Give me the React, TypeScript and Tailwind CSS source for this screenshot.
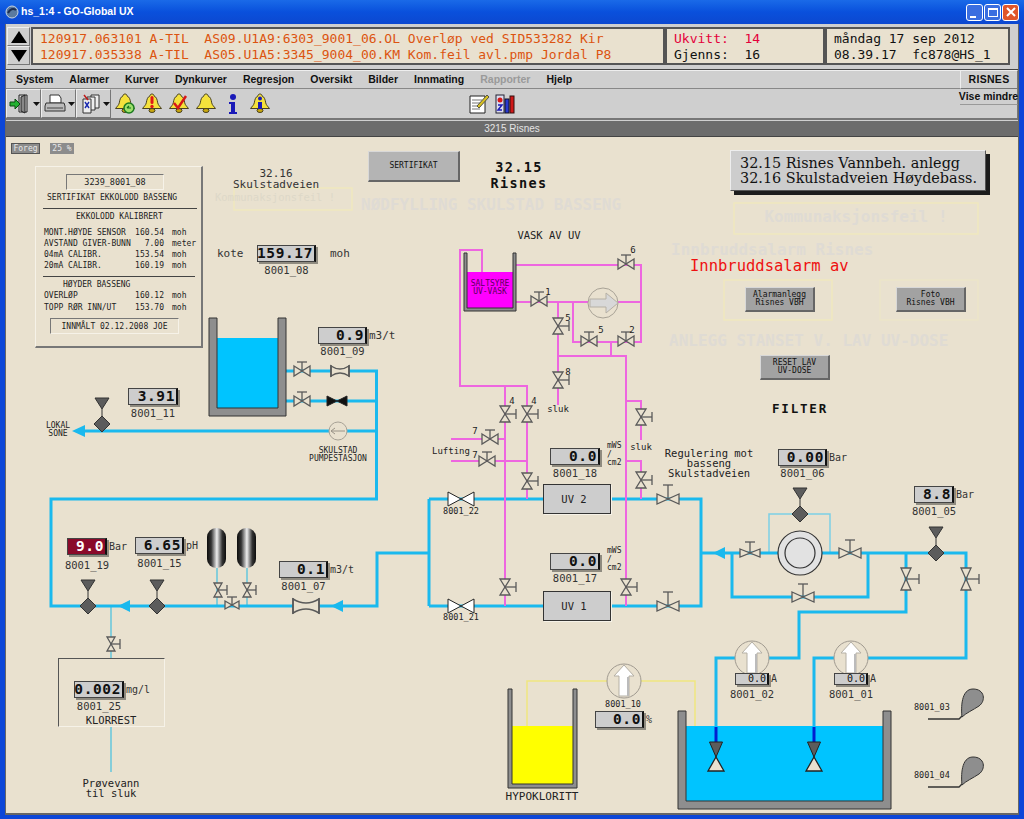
import React from "react";

const OX = 6;
const OY = 137;
const BLUE = "#1ab9ee";
const PINK = "#ee66e0";
const THIN = "#63c6dc";
const VAL = "#5a5a5a";
const BG = "#e9e1cf";

type LabelProps = { x: number; y: number; a?: "l" | "c" | "r"; cls?: string; lead?: string; children: React.ReactNode };

function L({ x, y, a = "l", cls = "text-[11px] text-[#333]", lead = "leading-none", children }: LabelProps) {
  const an = a === "c" ? "-translate-x-1/2 text-center" : a === "r" ? "-translate-x-full" : "";
  return (
    <span
      className={`absolute -translate-y-1/2 whitespace-pre font-['DejaVu_Sans_Mono',monospace] ${lead} ${an} ${cls}`}
      style={{ left: x - OX, top: y - OY }}
    >
      {children}
    </span>
  );
}

function Disp({ w, h = 17, v, red, small }: { w: number; h?: number; v: string; red?: boolean; small?: boolean }) {
  return (
    <div
      className={`flex items-center justify-end border border-[#444] border-r-2 border-r-[#111] shadow-[2px_2px_0_#8f8b80] pr-[1px] leading-none font-['DejaVu_Sans_Mono',monospace] ${
        red ? "bg-[#8a0a2a] text-white" : "bg-[#cdcdcd] text-[#111]"
      } ${small ? "text-[10px] font-normal" : "text-[14.5px] font-bold tracking-[0.6px]"}`}
      style={{ width: w, height: h }}
    >
      {v}
    </div>
  );
}

/* one instrument node of the diagram: value box, unit at its right, tag below */
function Inst({ x, y, w, h, v, tag, unit, unitCls = "text-[10px] text-[#333]", red, small, gap = 2 }: {
  x: number; y: number; w: number; h?: number; v: string; tag: string; unit?: string; unitCls?: string; red?: boolean; small?: boolean; gap?: number;
}) {
  return (
    <div
      className="absolute grid font-['DejaVu_Sans_Mono',monospace]"
      style={{ left: x - OX, top: y - OY, gridTemplateColumns: `${w}px auto`, rowGap: gap }}
    >
      <Disp w={w} h={h} v={v} red={red} small={small} />
      <span className={`self-center ml-[2px] leading-none whitespace-pre ${unitCls}`}>{unit ?? ""}</span>
      <span className="justify-self-center text-[10.5px] leading-[11px] text-[#333] whitespace-pre">{tag}</span>
    </div>
  );
}

function Btn({ x, y, w, h, lines, cls = "bg-[#a2a2a2]" }: { x: number; y: number; w: number; h: number; lines: string[]; cls?: string }) {
  return (
    <div
      className={`absolute flex flex-col items-center justify-center border-t border-l border-[#d8d8d8] border-r-2 border-b-2 border-r-[#666] border-b-[#666] text-[8px] leading-[8px] text-[#111] font-['DejaVu_Sans_Mono',monospace] ${cls}`}
      style={{ left: x - OX, top: y - OY, width: w, height: h }}
    >
      {lines.map((l) => (
        <span key={l}>{l}</span>
      ))}
    </div>
  );
}

/* ---------- SVG process symbols ---------- */
function VH({ x, y, w = 8, h = 5, s = 9, c = VAL }: { x: number; y: number; w?: number; h?: number; s?: number; c?: string }) {
  return (
    <g stroke={c} strokeWidth={1.3} fill={BG}>
      <polygon points={`${x - w},${y - h} ${x},${y} ${x - w},${y + h}`} />
      <polygon points={`${x + w},${y - h} ${x},${y} ${x + w},${y + h}`} />
      <line x1={x} y1={y} x2={x} y2={y - s} />
      <line x1={x - 5} y1={y - s} x2={x + 5} y2={y - s} />
    </g>
  );
}
function VV({ x, y, w = 5, h = 8, s = 11, c = VAL }: { x: number; y: number; w?: number; h?: number; s?: number; c?: string }) {
  return (
    <g stroke={c} strokeWidth={1.3} fill={BG}>
      <polygon points={`${x - w},${y - h} ${x},${y} ${x + w},${y - h}`} />
      <polygon points={`${x - w},${y + h} ${x},${y} ${x + w},${y + h}`} />
      <line x1={x} y1={y} x2={x + s} y2={y} />
      <line x1={x + s} y1={y - 5} x2={x + s} y2={y + 5} />
    </g>
  );
}
function Bow({ x, y, w = 13, h = 7, fill = "#fff" }: { x: number; y: number; w?: number; h?: number; fill?: string }) {
  return (
    <g stroke="#222" strokeWidth={1} fill={fill}>
      <polygon points={`${x - w},${y - h} ${x},${y} ${x - w},${y + h}`} />
      <polygon points={`${x + w},${y - h} ${x},${y} ${x + w},${y + h}`} />
    </g>
  );
}
function Meter({ x, y, w = 9, h = 6 }: { x: number; y: number; w?: number; h?: number }) {
  return (
    <g>
      <path
        d={`M${x - w} ${y - h + 1}Q${x} ${y + 1} ${x + w} ${y - h + 1}V${y + h - 1}Q${x} ${y - 1} ${x - w} ${y + h - 1}z`}
        fill={BG}
        stroke={VAL}
        strokeWidth={1.5}
      />
      <path d={`M${x - w} ${y - h}v${2 * h}M${x + w} ${y - h}v${2 * h}`} stroke={VAL} strokeWidth={1.5} />
    </g>
  );
}
function Gauge({ x, y, top = 26 }: { x: number; y: number; top?: number }) {
  return (
    <g stroke="#333" fill="#5c5c5c" strokeWidth={1}>
      <polygon points={`${x - 7},${y - top} ${x + 7},${y - top} ${x},${y - top + 11}`} />
      <line x1={x} y1={y - top + 11} x2={x} y2={y - 7} />
      <polygon points={`${x},${y - 8} ${x + 8},${y} ${x},${y + 8} ${x - 8},${y}`} />
    </g>
  );
}
function ArrL({ x, y }: { x: number; y: number }) {
  return <polygon points={`${x},${y} ${x + 12},${y - 6} ${x + 12},${y + 6}`} fill={BLUE} />;
}
function PumpUp({ x, y, r = 17 }: { x: number; y: number; r?: number }) {
  return (
    <g>
      <circle cx={x} cy={y} r={r} fill={BG} stroke="#a09a90" strokeWidth={1} />
      <polygon
        points={`${x},${y - r + 1} ${x + 10},${y - 5} ${x + 5},${y - 5} ${x + 5},${y + r - 2} ${x - 5},${y + r - 2} ${x - 5},${y - 5} ${x - 10},${y - 5}`}
        fill="#fff"
        stroke="#b5b0a5"
      />
      <line x1={x + 4} y1={y - 4} x2={x + 4} y2={y + r - 2} stroke="#bbb" strokeWidth={2} />
    </g>
  );
}
function Tank({ x, y, w, h, t, top, fill }: { x: number; y: number; w: number; h: number; t: number; top: number; fill: string }) {
  return (
    <g>
      <rect x={x + t} y={top} width={w - 2 * t} height={y + h - t - top} fill={fill} />
      <path
        d={`M${x} ${y}h${t}v${h - t}h${w - 2 * t}v${-(h - t)}h${t}v${h}h${-w}z`}
        fill="#8e8e8e"
        stroke="#333"
        strokeWidth={1}
      />
    </g>
  );
}
function Tear({ y }: { y: number }) {
  return (
    <g>
      <path d={`M928 ${y + 19}h31l3 -3`} stroke="#333" strokeWidth={1.4} fill="none" />
      <path
        d={`M962 ${y + 17}C961 ${y + 8} 961 ${y - 11} 973 ${y - 11}C985 ${y - 11} 986 ${y + 1} 979 ${y + 6}C973 ${y + 10} 966 ${y + 13} 962 ${y + 17}z`}
        fill="#8e8e8e"
        stroke="#333"
      />
    </g>
  );
}
function poly(d: string, c: string, w: number) {
  return <polyline points={d} fill="none" stroke={c} strokeWidth={w} />;
}

function Diagram() {
  return (
    <svg className="absolute inset-0" width={1012} height={678} viewBox={`${OX} ${OY} 1012 678`}>
      <defs>
        <linearGradient id="vess" x1="0" x2="1" y1="0" y2="0">
          <stop offset="0" stopColor="#0c0c0c" />
          <stop offset="0.22" stopColor="#333" />
          <stop offset="0.52" stopColor="#efefef" />
          <stop offset="0.8" stopColor="#333" />
          <stop offset="1" stopColor="#0c0c0c" />
        </linearGradient>
      </defs>

      {/* faint yellow frames */}
      <g fill="none" stroke="#efe8bf" strokeWidth={1.5}>
        <rect x={234} y={188} width={118} height={22} />
        <rect x={734} y={203} width={244} height={31} />
        <rect x={724} y={280} width={108} height={40} />
        <rect x={880} y={280} width={98} height={40} stroke="#ece5c9" />
      </g>

      {/* yellow dosing line */}
      <g>{poly("527,726 527,681 695,681 695,726", "#efe680", 1.5)}</g>

      {/* thin service lines */}
      {poly("217,568 217,606", THIN, 1.5)}
      {poly("247,568 247,606", THIN, 1.5)}
      {poly("111,606 111,658", THIN, 1.5)}
      {poly("111,727 111,772", THIN, 1.5)}
      {poly("769,553 769,514 830,514 830,553", "#7ccfe6", 1.5)}

      {/* main blue pipes */}
      <g>
        {poly("286,371 376.5,371 376.5,499 51,499 51,606 377,606 377,553 429,553", BLUE, 3)}
        {poly("286,401 376.5,401", BLUE, 3)}
        {poly("85,431 376.5,431", BLUE, 3)}
        {poly("429,499 429,606", BLUE, 3)}
        {poly("429,499 543,499", BLUE, 3)}
        {poly("429,606 543,606", BLUE, 3)}
        {poly("611,499 701,499 701,606 611,606", BLUE, 3)}
        {poly("701,553 966,553 966,658 814,658 814,727", BLUE, 3)}
        {poly("732,553 732,597 868,597 868,553", BLUE, 3)}
        {poly("906,553 906,612 799,612 799,658 716,658 716,727", BLUE, 3)}
      </g>

      {/* pink wash lines */}
      <g>
        {poly("482,272 482,250 460,250 460,386 527,386 527,499", PINK, 2)}
        {poly("505,386 505,606", PINK, 2)}
        {poly("516,265 641,265 641,342 573,342 573,302", PINK, 2)}
        {poly("516,302 641,302", PINK, 2)}
        {poly("558,302 558,405", PINK, 2)}
        {poly("558,356 626,356 626,606", PINK, 2)}
        {poly("611,342 611,356", PINK, 2)}
        {poly("626,401 641,401 641,440", PINK, 2)}
        {poly("626,461 641,461 641,499", PINK, 2)}
        {poly("451,439 505,439", PINK, 2)}
        {poly("451,461 527,461", PINK, 2)}
      </g>

      {/* tanks */}
      <Tank x={209} y={318} w={77} h={98} t={8} top={338} fill="#00c4ff" />
      <Tank x={464} y={253} w={52} h={58} t={3} top={272} fill="#ff00ff" />
      <Tank x={508} y={689} w={69} h={99} t={4} top={726} fill="#ffff00" />
      <Tank x={678} y={711} w={213} h={98} t={8} top={726} fill="#00c4ff" />

      {/* dark-blue drop pipes and tank valves */}
      {[716, 814].map((x) => (
        <g key={x}>
          <line x1={x} y1={727} x2={x} y2={742} stroke="#0020d0" strokeWidth={3} />
          <polygon points={`${x - 6.5},${742} ${x + 6.5},${742} ${x},${757}`} fill="#5c5c5c" stroke="#222" />
          <polygon points={`${x},${757} ${x + 8},${771} ${x - 8},${771}`} fill={BG} stroke="#222" strokeWidth={1.3} />
        </g>
      ))}

      {/* vessels */}
      <rect x={207} y={528} width={19} height={40} rx={9} fill="url(#vess)" />
      <rect x={237} y={528} width={19} height={40} rx={9} fill="url(#vess)" />

      {/* arrows */}
      <polygon points="72,431 85,425 85,437" fill={BLUE} />
      <ArrL x={118} y={606} />
      <ArrL x={331} y={606} />
      <ArrL x={713} y={553} />

      {/* valves */}
      <VH x={302} y={371} />
      <VH x={302} y={401} />
      <Meter x={340} y={371} />
      <Bow x={337} y={401} w={10} h={5} fill="#111" />
      <VV x={111} y={644} w={4} h={7} s={9} />
      <VV x={218} y={590} w={4} h={7} s={9} />
      <VV x={247} y={590} w={4} h={7} s={9} />
      <VH x={232} y={605} w={7} h={4} s={8} />
      <Meter x={306} y={606} w={13} h={8} />

      <VH x={539} y={301} />
      <VH x={589} y={341} />
      <VH x={626} y={341} />
      <VH x={626} y={264} />
      <VV x={558} y={326} />
      <VV x={558} y={380} />
      <VV x={505} y={414} />
      <VV x={527} y={414} />
      <VV x={527} y={481} />
      <VV x={505} y={587} />
      <VV x={626} y={587} />
      <VV x={641} y={417} />
      <VV x={641} y={480} />
      <VH x={490} y={439} />
      <VH x={487} y={461} />

      <Bow x={461} y={499} />
      <Bow x={461} y={606} />
      <VH x={668} y={499} w={11} h={5} s={14} />
      <VH x={668} y={606} w={11} h={5} s={14} />
      <VH x={750} y={553} w={10} h={4} s={11} />
      <VH x={850} y={553} w={11} h={5} s={13} />
      <VH x={803} y={597} w={11} h={5} s={13} />
      <VV x={906} y={579} w={5} h={11} s={13} />
      <VV x={966} y={579} w={5} h={11} s={13} />

      {/* small pumps */}
      <g>
        <circle cx={338} cy={431} r={9} fill={BG} stroke="#a8a296" />
        <path d="M331 431h14M335 428l-4 3 4 3" stroke="#9a9488" fill="none" />
      </g>
      <g>
        <circle cx={603} cy={303} r={15} fill={BG} stroke="#a8a296" />
        <polygon points="590,299 606,299 606,293 618,303 606,313 606,307 590,307" fill="#d8d8d8" stroke="#b5b0a5" />
      </g>
      <PumpUp x={624} y={681} />
      <PumpUp x={752} y={658} />
      <PumpUp x={851} y={658} />

      {/* filter */}
      <circle cx={800} cy={553} r={22} fill="#e2e2e2" stroke="#333" strokeWidth={1.2} />
      <circle cx={800} cy={553} r={15} fill="#e2e2e2" stroke="#333" strokeWidth={1.2} />

      {/* pressure gauges */}
      <Gauge x={102} y={424} />
      <Gauge x={88} y={606} />
      <Gauge x={157} y={606} />
      <Gauge x={800} y={514} />
      <Gauge x={936} y={553} />

      <Tear y={700} />
      <Tear y={768} />
    </svg>
  );
}

function CertRow({ a, b, c }: { a: string; b: string; c: string }) {
  return (
    <div className="flex ml-[8px] w-[160px] leading-[11px]">
      <span className="w-[120px] flex justify-between">
        <span>{a}</span>
        <span>{b}</span>
      </span>
      <span className="ml-[8px]">{c}</span>
    </div>
  );
}

function CertPanel() {
  const sunken =
    "flex items-center justify-center h-[16px] border-t border-l border-[#777] border-r border-b border-r-[#f6f2e8] border-b-[#f6f2e8]";
  return (
    <div
      className="absolute flex flex-col items-start pt-[7px] border-t border-l border-t-[#f6f2e8] border-l-[#f6f2e8] border-r-2 border-b-2 border-r-[#777] border-b-[#777] text-[8px] leading-[11px] text-[#222] whitespace-pre font-['DejaVu_Sans_Mono',monospace]"
      style={{ left: 35 - OX, top: 166 - OY, width: 168, height: 182 }}
    >
      <div className={`${sunken} ml-[30px] w-[98px] text-[8.5px]`}>3239_8001_08</div>
      <span className="ml-[11px] mt-[2px]">SERTIFIKAT EKKOLODD BASSENG</span>
      <div className="ml-[7px] mt-[5px] w-[154px] h-px bg-[#444]" />
      <span className="ml-[40px] mt-[2px]">EKKOLODD KALIBRERT</span>
      <div className="flex flex-col mt-[5px]">
        <CertRow a="MONT.HØYDE SENSOR" b="160.54" c="moh" />
        <CertRow a="AVSTAND GIVER-BUNN" b="7.00" c="meter" />
        <CertRow a="04mA CALIBR." b="153.54" c="moh" />
        <CertRow a="20mA CALIBR." b="160.19" c="moh" />
      </div>
      <div className="ml-[7px] mt-[5px] w-[152px] h-px bg-[#444]" />
      <span className="ml-[27px] mt-[2px]">HØYDER BASSENG</span>
      <div className="flex flex-col gap-[1px]">
        <CertRow a="OVERLØP" b="160.12" c="moh" />
        <CertRow a="TOPP RØR INN/UT" b="153.70" c="moh" />
      </div>
      <div className={`${sunken} ml-[14px] mt-[5px] w-[129px]`}>INNMÅLT 02.12.2008 JOE</div>
    </div>
  );
}

function Canvas() {
  const t11 = "text-[11px] text-[#333]";
  const t10 = "text-[10.5px] text-[#222]";
  const t8 = "text-[8px] text-[#222]";
  const t85 = "text-[8.5px] text-[#222]";
  const fade = "text-[16px] font-bold text-[#dfdbd4]";
  return (
    <div className="relative flex-1 bg-[#e9e1cf] overflow-hidden">
      <Diagram />

      <div className="absolute flex gap-[10px] text-[8px] leading-none text-[#e8e8e8] font-['DejaVu_Sans_Mono',monospace]" style={{ left: 11 - OX, top: 143 - OY }}>
        <span className="flex items-center justify-center w-[29px] h-[11px] bg-[#8c8c8c] border border-[#555]">Foreg</span>
        <span className="flex items-center justify-center w-[24px] h-[11px] bg-[#8c8c8c]">25 %</span>
      </div>

      <CertPanel />

      <L x={276} y={179} a="c" cls={t11} lead="leading-[11px]">{"32.16\nSkulstadveien"}</L>
      <L x={275} y={197} a="c" cls="text-[10.5px] text-[#ddd8c8]">Kommunaksjonsfeil !</L>
      <L x={361} y={205} cls={fade}>NØDFYLLING SKULSTAD BASSENG</L>

      <Btn x={368} y={151} w={92} h={31} lines={["SERTIFIKAT"]} cls="bg-[#b4b4b4]" />
      <L x={519} y={175} a="c" cls="text-[13.5px] font-bold tracking-[1.4px] text-[#111]" lead="leading-[16px]">{"32.15\nRisnes"}</L>

      <div
        className="absolute flex flex-col justify-center pl-[9px] bg-[#cdcdcd] border border-t-[#eee] border-l-[#eee] border-r-[#555] border-b-[#555] shadow-[4px_4px_0_#1c1c1c] text-[14.4px] leading-[15px] text-[#111] font-['DejaVu_Serif',serif]"
        style={{ left: 730 - OX, top: 150 - OY, width: 256, height: 41 }}
      >
        <span className="whitespace-pre">32.15 Risnes Vannbeh. anlegg</span>
        <span className="whitespace-pre">32.16 Skulstadveien Høydebass.</span>
      </div>

      <L x={856} y={217} a="c" cls={fade}>Kommunaksjonsfeil !</L>
      <L x={671} y={250} cls={fade} lead="leading-[12px]">Innbruddsalarm Risnes</L>
      <L x={690} y={266} cls="text-[15.5px] font-medium text-[#ee1111]" lead="leading-[12px]">Innbruddsalarm av</L>
      <L x={669} y={341} cls={fade}>ANLEGG STANSET V. LAV UV-DOSE</L>
      <Btn x={745} y={287} w={70} h={25} lines={["Alarmanlegg", "Risnes VBH"]} />
      <Btn x={896} y={287} w={70} h={25} lines={["Foto", "Risnes VBH"]} />
      <Btn x={760} y={355} w={70} h={25} lines={["RESET LAV", "UV-DOSE"]} />
      <L x={800} y={409} a="c" cls="text-[12.5px] font-bold tracking-[1.8px] text-[#111]">FILTER</L>

      <L x={217} y={253} cls={t11}>kote</L>
      <Inst x={257} y={245} w={59} v="159.17" tag="8001_08" gap={3} />
      <L x={330} y={253} cls={t11}>moh</L>

      <Inst x={318} y={327} w={49} v="0.9" tag="8001_09" unit="m3/t" unitCls="text-[11px] text-[#333]" />
      <Inst x={128} y={388} w={50} v="3.91" tag="8001_11" gap={3} />
      <L x={58} y={430} a="c" cls={t8} lead="leading-[8px]">{"LOKAL\nSONE"}</L>
      <L x={338} y={455} a="c" cls={t8} lead="leading-[8px]">{"SKULSTAD\nPUMPESTASJON"}</L>

      <Inst x={67} y={538} w={40} v="9.0" red tag="8001_19" unit="Bar" gap={5} />
      <Inst x={135} y={537} w={49} v="6.65" tag="8001_15" unit="pH" gap={4} />
      <Inst x={279} y={561} w={49} v="0.1" tag="8001_07" unit="m3/t" gap={3} />

      <div
        className="absolute border-t border-l border-t-[#555] border-l-[#555] border-r border-b border-r-[#f6f2e8] border-b-[#f6f2e8]"
        style={{ left: 58 - OX, top: 658 - OY, width: 107, height: 69 }}
      />
      <Inst x={74} y={681} w={50} v="0.002" tag="8001_25" unit="mg/l" gap={3} />
      <L x={111} y={720} a="c" cls="text-[10.5px] text-[#222]">KLORREST</L>
      <L x={111} y={788} a="c" cls={t10} lead="leading-[10px]">{"Prøvevann\ntil sluk"}</L>

      <L x={549} y={235} a="c" cls={t10}>VASK AV UV</L>
      <L x={490} y={288} a="c" cls="text-[8px] text-[#5a005a]" lead="leading-[8px]">{"SALTSYRE\nUV-VASK"}</L>
      {([
        [548, 292, "1"], [633, 250, "6"], [568, 318, "5"], [601, 330, "5"], [632, 330, "2"],
        [568, 372, "8"], [512, 401, "4"], [534, 401, "4"], [475, 431, "7"], [475, 455, "7"],
      ] as [number, number, string][]).map(([x, y, t]) => (
        <L key={`${x}-${y}`} x={x} y={y} a="c" cls="text-[9px] text-[#222]">{t}</L>
      ))}
      <L x={558} y={409} a="c" cls="text-[9px] text-[#222]">sluk</L>
      <L x={641} y={447} a="c" cls="text-[9px] text-[#222]">sluk</L>
      <L x={451} y={451} a="c" cls="text-[9px] text-[#222]">Lufting</L>

      <Inst x={550} y={448} w={50} v="0.0" tag="8001_18" gap={3} />
      <L x={607} y={455} cls={t8} lead="leading-[8.5px]">{"mWS\n/\ncm2"}</L>
      <Inst x={550} y={553} w={50} v="0.0" tag="8001_17" gap={3} />
      <L x={607} y={560} cls={t8} lead="leading-[8.5px]">{"mWS\n/\ncm2"}</L>

      <div className="absolute flex items-center justify-center pr-[6px] bg-[#cdcdcd] border border-[#333] shadow-[1px_1px_0_#f6f2e8] text-[10.5px] leading-none text-[#222] font-['DejaVu_Sans_Mono',monospace]" style={{ left: 543 - OX, top: 484 - OY, width: 68, height: 30 }}>UV 2</div>
      <div className="absolute flex items-center justify-center pr-[6px] bg-[#cdcdcd] border border-[#333] shadow-[1px_1px_0_#f6f2e8] text-[10.5px] leading-none text-[#222] font-['DejaVu_Sans_Mono',monospace]" style={{ left: 543 - OX, top: 591 - OY, width: 68, height: 30 }}>UV 1</div>
      <L x={461} y={511} a="c" cls={t85}>8001_22</L>
      <L x={461} y={617} a="c" cls={t85}>8001_21</L>

      <L x={709} y={463} a="c" cls={t10} lead="leading-[10px]">{"Regulering mot\nbasseng\nSkulstadveien"}</L>

      <Inst x={778} y={449} w={49} v="0.00" tag="8001_06" unit="Bar" />
      <Inst x={914} y={486} w={40} v="8.8" tag="8001_05" unit="Bar" gap={3} />

      <L x={623} y={704} a="c" cls={t85}>8001_10</L>
      <Inst x={595} y={711} w={49} v="0.0" tag="" unit="%" />
      <L x={542} y={796} a="c" cls="text-[11px] text-[#222]">HYPOKLORITT</L>

      <Inst x={735} y={673} w={34} h={12} v="0.0" small tag="8001_02" unit="A" gap={4} />
      <Inst x={834} y={673} w={34} h={12} v="0.0" small tag="8001_01" unit="A" gap={4} />

      <L x={914} y={707} cls={t85}>8001_03</L>
      <L x={914} y={775} cls={t85}>8001_04</L>
    </div>
  );
}

/* ---------- toolbar icons ---------- */
const bellPath = "M11 1c-1.4 0-2 .9-2 1.9C6.300 4 5.800 7 5.300 9.800 4.900 12 3 13.500 1.500 15.500h19C19 13.500 17.100 12 16.700 9.800 16.200 7 15.700 4 13 2.900 13 1.900 12.400 1 11 1z";
function Bell({ children }: { children?: React.ReactNode }) {
  return (
    <svg width={22} height={22} viewBox="0 0 22 22" className="shrink-0">
      <path d={bellPath} fill="#f5e23c" stroke="#4a4220" strokeWidth={1} />
      <ellipse cx={11} cy={17.500} rx={3} ry={2} fill="#c9a80e" stroke="#4a4220" />
      {children}
    </svg>
  );
}
function ToolGroup({ children }: { children: React.ReactNode }) {
  return (
    <div className="flex items-center w-[35px] h-[29px] pl-[2px] border-t border-l border-[#eeeeee] border-r border-b border-r-[#777] border-b-[#777]">
      {children}
      <svg width={7} height={4} viewBox="0 0 7 4" className="ml-[2px] shrink-0">
        <polygon points="0,0 7,0 3.500,4" fill="#111" />
      </svg>
    </div>
  );
}

function Toolbar() {
  return (
    <div className="flex items-center h-[29px] relative">
      <ToolGroup>
        <svg width={22} height={20} viewBox="0 0 22 20" className="shrink-0">
          <path d="M10 1h8v17h-8z" fill="#ddd" stroke="#222" />
          <path d="M12 3l4 -2v18l-4-2z" fill="#888" stroke="#222" />
          <path d="M1 8h5V5l5 5-5 5v-3H1z" fill="#22b030" stroke="#0a4a10" />
        </svg>
      </ToolGroup>
      <ToolGroup>
        <svg width={22} height={20} viewBox="0 0 22 20" className="shrink-0">
          <path d="M6 1h9l2 3v5H6z" fill="#fff" stroke="#333" />
          <path d="M2 9h18l1 3v5H1v-5z" fill="#bbb" stroke="#333" />
          <path d="M3 14h16" stroke="#444" />
        </svg>
      </ToolGroup>
      <ToolGroup>
        <svg width={22} height={20} viewBox="0 0 22 20" className="shrink-0">
          <path d="M12 1h8v13h-8z" fill="#eee" stroke="#333" />
          <path d="M8 3h8v13H8z" fill="#eee" stroke="#333" />
          <path d="M4 5h8v14H4z" fill="#eee" stroke="#333" />
          <path d="M6 8l4 6M10 8l-4 6" stroke="#1a2ab0" strokeWidth={1.4} />
          <path d="M5 1l4 5" stroke="#c01818" strokeWidth={1.5} />
        </svg>
      </ToolGroup>
      <div className="flex items-center gap-[5px] ml-[3px]">
        <Bell>
          <circle cx={15} cy={15} r={5} fill="#9de06a" stroke="#1c7a20" strokeWidth={1.5} />
          <path d="M13 15h4M13 15l2-2" stroke="#137018" strokeWidth={1.2} fill="none" />
        </Bell>
        <Bell>
          <rect x={9.500} y={3} width={3} height={8} rx={1.500} fill="#e01818" />
          <circle cx={11} cy={13.500} r={1.700} fill="#e01818" />
        </Bell>
        <Bell>
          <path d="M6 10l4 5 8-12" stroke="#d81818" strokeWidth={2.500} fill="none" />
        </Bell>
        <Bell />
        <svg width={22} height={22} viewBox="0 0 22 22" className="shrink-0">
          <circle cx={11} cy={4} r={3} fill="#1a1ab8" />
          <path d="M7 9h6v10h2v2H7v-2h2v-8H7z" fill="#1a1ab8" />
        </svg>
        <Bell>
          <circle cx={11} cy={5.500} r={2} fill="#1a1ab8" />
          <rect x={9} y={9} width={4} height={7} fill="#1a1ab8" />
        </Bell>
      </div>
      <div className="flex items-center gap-[5px] ml-[198px]">
        <svg width={21} height={21} viewBox="0 0 21 21" className="shrink-0">
          <path d="M1 3h15v17H1z" fill="#fff" stroke="#222" />
          <path d="M3 7h10M3 10h10M3 13h8M3 16h8" stroke="#777" />
          <path d="M8 13l10-11 2 2-10 11z" fill="#d8c020" stroke="#554" />
        </svg>
        <svg width={21} height={21} viewBox="0 0 21 21" className="shrink-0">
          <rect x={1} y={2} width={8} height={18} fill="#dde" stroke="#223" />
          <circle cx={5} cy={7} r={2.500} fill="#d81818" />
          <path d="M3 12h4l-4 5h4" stroke="#1a1ab8" strokeWidth={1.5} fill="none" />
          <rect x={10} y={6} width={4} height={14} fill="#2a3ad0" stroke="#112" />
          <rect x={15} y={3} width={4} height={17} fill="#d01818" stroke="#311" />
        </svg>
      </div>
    </div>
  );
}

function AlarmBar() {
  const panel =
    "flex flex-col justify-center pt-[2px] border-2 border-t-[#555] border-l-[#555] border-r-[#555] border-b-[#555] bg-[#e9e1cf] text-[13px] leading-[16px] whitespace-pre font-['DejaVu_Sans_Mono',monospace]";
  return (
    <div className="flex items-stretch h-[46px] pt-[3px] pb-[4px] pl-[1px] pr-[8px] border-b border-[#444] bg-[#cfcfcf]">
      <div className="flex flex-col w-[23px] mr-[1px]">
        {["M0 12L8 0l8 12z", "M0 0h16L8 12z"].map((d) => (
          <div key={d} className="flex flex-1 items-center justify-center border-t border-l border-[#eeeeee] border-r border-b border-r-[#777] border-b-[#777]">
            <svg width={16} height={12} viewBox="0 0 16 12"><path d={d} fill="#000" /></svg>
          </div>
        ))}
      </div>
      <div className={`${panel} w-[634px] pl-[7px] text-[#dc5410]`}>
        <span>120917.063101 A-TIL  AS09.U1A9:6303_9001_06.OL Overløp ved SID533282 Kir</span>
        <span>120917.035338 A-TIL  AS05.U1A5:3345_9004_00.KM Kom.feil avl.pmp Jordal P8</span>
      </div>
      <div className={`${panel} w-[160px] pl-[7px] text-[#111]`}>
        <span className="text-[#e4003a]">Ukvitt:  14</span>
        <span>Gjenns:  16</span>
      </div>
      <div className={`${panel} flex-1 pl-[7px] text-[#111]`}>
        <span>måndag 17 sep 2012</span>
        <span>08.39.17  fc878@HS_1</span>
      </div>
    </div>
  );
}

function Menus() {
  const items = ["System", "Alarmer", "Kurver", "Dynkurver", "Regresjon", "Oversikt", "Bilder", "Innmating", "Rapporter", "Hjelp"];
  return (
    <div className="flex h-[50px] bg-[#cfcfcf] border-b-2 border-[#777] font-['Liberation_Sans',sans-serif]">
      <div className="flex-1 flex flex-col">
        <div className="flex items-center gap-[16px] h-[19px] pl-[10px] border-t border-[#eeeeee] border-b border-b-[#888] text-[10.5px] font-bold text-[#111]">
          {items.map((m) => (
            <span key={m} className={m === "Rapporter" ? "text-[#9a9a9a]" : ""}>{m}</span>
          ))}
        </div>
        <Toolbar />
      </div>
      <div className="flex flex-col w-[58px] text-center font-bold text-[#111]">
        <div className="h-[19px] flex items-center justify-center text-[10.5px] tracking-[0.3px] border border-t-[#eeeeee] border-l-[#eeeeee] border-r-[#777] border-b-[#777]">RISNES</div>
        <div className="h-[16px] flex items-center justify-center text-[10.5px] whitespace-pre border-r border-b border-r-[#777] border-b-[#999]">Vise mindre</div>
        <div className="flex-1 border-r border-[#777]" />
      </div>
    </div>
  );
}

export default function App() {
  return (
    <div className="w-[1024px] h-[819px] flex flex-col overflow-hidden bg-[#0c46d8]">
      <div className="h-[24px] flex items-center pl-[5px] pr-[5px] bg-gradient-to-b from-[#1a6ae8] via-[#0a50dc] to-[#0c48d0] text-white font-['Liberation_Sans',sans-serif]">
        <svg width={14} height={14} viewBox="0 0 14 14" className="shrink-0">
          <circle cx={7} cy={7} r={6} fill="#5a7aa0" stroke="#c8d4e0" />
          <path d="M3 8c2-4 5-5 8-3" stroke="#1e2e50" strokeWidth={2} fill="none" />
        </svg>
        <span className="ml-[2px] text-[10.5px] font-bold">hs_1:4 - GO-Global UX</span>
        <div className="ml-auto flex gap-[1px]">
          <div className="w-[17px] h-[17px] rounded-[3px] border border-white bg-[#3a6ee0] flex items-end pl-[3px] pb-[2px]"><div className="w-[6px] h-[2px] bg-white" /></div>
          <div className="w-[17px] h-[17px] rounded-[3px] border border-white bg-[#3a6ee0] flex items-center justify-center"><div className="w-[10px] h-[9px] border border-white border-t-2" /></div>
          <div className="w-[17px] h-[17px] rounded-[3px] border border-white bg-[#e0562a] flex items-center justify-center">
            <svg width={10} height={10} viewBox="0 0 10 10"><path d="M1 1l8 8M9 1l-8 8" stroke="#fff" strokeWidth={2} /></svg>
          </div>
        </div>
      </div>
      <div className="flex-1 flex flex-col min-h-0 ml-[5px] mr-[5px] mb-[4px] border-b-2 border-x border-[#666] bg-[#cfcfcf]">
        <AlarmBar />
        <Menus />
        <div className="h-[16px] mt-[1px] flex items-center justify-center bg-[#6c6c6c] border-b border-[#444] text-[10px] leading-none text-[#e4e4e4] font-['Liberation_Sans',sans-serif]">3215 Risnes</div>
        <Canvas />
      </div>
    </div>
  );
}
